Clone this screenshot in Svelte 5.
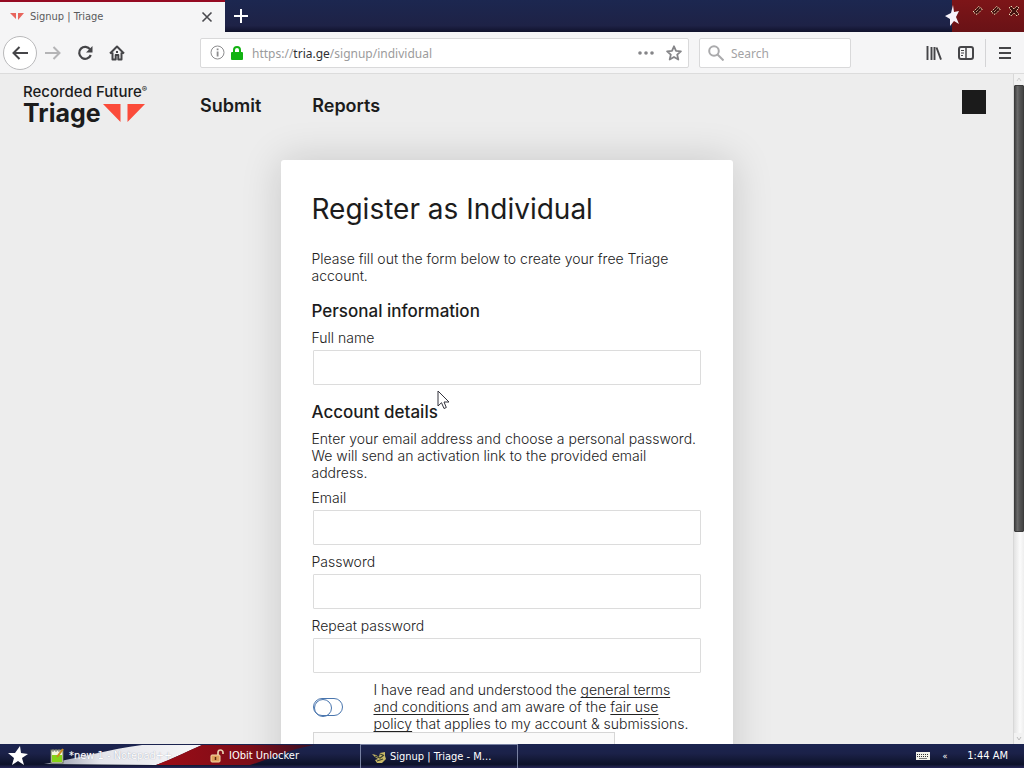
<script>
  let fullName = $state('');
  let email = $state('');
  let password = $state('');
  let repeated = $state('');
  let accepted = $state(false);
</script>

<div class="desktop">
  <div class="tabs">
    <div class="tab">
      <svg width="16" height="12" viewBox="0 0 16 12" aria-hidden="true"><path d="M1 2h6v6zM9 2h6l-6 7z" fill="#e8655d" /></svg>
      <span>Signup | Triage</span>
      <button aria-label="Close tab"><svg width="12" height="12" viewBox="0 0 12 12"><path d="M1.5 1.5l9 9m0-9l-9 9" stroke="#4a4a4f" stroke-width="1.6" /></svg></button>
    </div>
    <button class="new" aria-label="New tab"><svg width="16" height="16" viewBox="0 0 16 16"><path d="M8 1v14M1 8h14" stroke="#fff" stroke-width="2" /></svg></button>
    <div class="titlebar-end">
      <svg class="titlestar" width="18" height="26" viewBox="0 0 18 26" aria-hidden="true"><path d="M10 0l1 7 5-1-3 6 3 7-5-3-4 5v-7l-5-3 6-3z" fill="#f7f3fb" /></svg>
      <button aria-label="Minimize"><svg width="12" height="12" viewBox="0 0 12 12"><path d="M1 7l5.500-5.500L10.500 4 5 9.500z" fill="#40100e" stroke="#f5dcb8" stroke-dasharray="1.5 1" /><path d="M4 7l3.500-3.500" stroke="#f5dcb8" stroke-dasharray="1 1" /></svg></button>
      <button aria-label="Restore"><svg width="12" height="12" viewBox="0 0 12 12"><path d="M1 7l5.500-5.500L10.500 4 5 9.500z" fill="#40100e" stroke="#f5dcb8" stroke-dasharray="1.5 1" /><path d="M4 7l3.500-3.500" stroke="#f5dcb8" stroke-dasharray="1 1" /></svg></button>
      <button aria-label="Close"><svg width="12" height="12" viewBox="0 0 12 12"><path d="M3 1l3 3 3-3 2 2-3 3 3 3-2 2-3-3-3 3-2-2 3-3-3-3z" fill="#40100e" stroke="#f5dcb8" stroke-dasharray="1.5 1" /></svg></button>
    </div>
  </div>

  <div class="toolbar">
    <div class="nav">
      <button class="back" aria-label="Back"><svg width="18" height="16" viewBox="0 0 18 16"><path d="M17 8H2.5M8.500 2l-6 6 6 6" fill="none" stroke="#454548" stroke-width="2" /></svg></button>
      <button aria-label="Forward"><svg width="16" height="16" viewBox="0 0 16 16"><path d="M0 8h14M8.500 2l6 6-6 6" fill="none" stroke="#b4b4b6" stroke-width="2" /></svg></button>
      <button aria-label="Reload"><svg width="16" height="16" viewBox="0 0 16 16"><path d="M13.200 4.500A6 6 0 1 0 13.800 10" fill="none" stroke="#454548" stroke-width="2.200" /><path d="M15.500 1v6.500H9z" fill="#454548" /></svg></button>
      <button aria-label="Home"><svg width="16" height="16" viewBox="0 0 16 16"><path d="M1 8.500l7-7 7 7M3.500 7.500V14.500h3.200v-4.500h2.600v4.500h3.200V7.500" fill="none" stroke="#454548" stroke-width="2" stroke-linejoin="round" /><path d="M7 6h2v2H7z" fill="#454548" /></svg></button>
    </div>
    <div class="address">
      <svg width="15" height="15" viewBox="0 0 15 15" aria-hidden="true"><circle cx="7.500" cy="7.500" r="6.500" fill="none" stroke="#8c8c8e" /><path d="M6.700 3.500h1.800v1.800H6.700zM6.700 6.500h1.800v5H6.700z" fill="#8c8c8e" /></svg>
      <svg width="12" height="14" viewBox="0 0 12 14" aria-hidden="true"><path d="M3 7V4a3 3 0 0 1 6 0v3" fill="none" stroke="#12b212" stroke-width="2" /><rect y="6" width="12" height="8" rx="1" fill="#12b212" /></svg>
      <a class="url" href="#signup">https://<b>tria.ge</b>/signup/individual</a>
      <button aria-label="Page actions"><svg width="16" height="16" viewBox="0 0 16 16"><g fill="#858588"><circle cx="2" cy="8" r="1.800" /><circle cx="8" cy="8" r="1.800" /><circle cx="14" cy="8" r="1.800" /></g></svg></button>
      <button aria-label="Bookmark"><svg width="16" height="16" viewBox="0 0 16 16"><path d="M8 1.300l2 4.500 4.900.5-3.700 3.300 1.100 4.900L8 12l-4.300 2.500 1.100-4.900L1.100 6.300 6 5.800z" fill="none" stroke="#858588" stroke-width="1.800" stroke-linejoin="round" /></svg></button>
    </div>
    <label class="search">
      <svg width="16" height="16" viewBox="0 0 16 16" aria-hidden="true"><circle cx="6" cy="6" r="4.800" fill="none" stroke="#aaaaac" stroke-width="2" /><path d="M9.500 9.500l6 6" stroke="#aaaaac" stroke-width="2" /></svg>
      <input type="search" placeholder="Search" aria-label="Search" />
    </label>
    <div class="tools">
      <button aria-label="Library"><svg width="16" height="16" viewBox="0 0 16 16"><path d="M1.500 1v14M5.500 2v13M8.500 2v13M10.500 2.500l4.500 12.200" fill="none" stroke="#454548" stroke-width="1.900" /></svg></button>
      <button aria-label="Sidebar"><svg width="16" height="16" viewBox="0 0 16 16"><rect x="1" y="2" width="14" height="12" rx="2" fill="none" stroke="#454548" stroke-width="2" /><path d="M8 2v12" stroke="#454548" stroke-width="1.500" /><path d="M3 5.500h3M3 8h3M3 10.500h2" stroke="#454548" /></svg></button>
      <span class="rule"></span>
      <button aria-label="Menu"><svg width="14" height="14" viewBox="0 0 14 14"><path d="M1 2h12M1 7h12M1 12h12" stroke="#454548" stroke-width="2" /></svg></button>
    </div>
  </div>

  <div class="view">
    <div class="page">
      <header>
        <a class="logo" href="#home">
          <span class="brand">Recorded Future<i>®</i></span>
          <span class="product">Triage<svg width="42" height="18" viewBox="0 0 42 18" aria-hidden="true"><path d="M0 0h17.500v18zM24.500 0H42L24.500 18z" fill="#fb4b3a" /></svg></span>
        </a>
        <nav>
          <a href="#submit">Submit</a>
          <a href="#reports">Reports</a>
        </nav>
        <button class="menu" aria-label="Account menu"></button>
      </header>

      <main>
        <form>
          <h1>Register as Individual</h1>
          <p class="intro">Please fill out the form below to create your free Triage account.</p>
          <h2>Personal information</h2>
          <label for="name">Full name</label>
          <input id="name" type="text" bind:value={fullName} />
          <h2>Account details</h2>
          <p>Enter your email address and choose a personal password. We will send an activation link to the provided email address.</p>
          <label for="email">Email</label>
          <input id="email" type="email" bind:value={email} />
          <label for="password">Password</label>
          <input id="password" type="password" bind:value={password} />
          <label for="repeat">Repeat password</label>
          <input id="repeat" type="password" bind:value={repeated} />
          <div class="terms">
            <input id="accept" type="checkbox" bind:checked={accepted} />
            <label for="accept">I have read and understood the <a href="#terms">general terms and conditions</a> and am aware of the <a href="#fair">fair use policy</a> that applies to my account &amp; submissions.</label>
          </div>
          <div class="captcha"></div>
        </form>
      </main>
    </div>
    <div class="scroll">
      <svg width="10" height="11" viewBox="0 0 10 11" aria-hidden="true"><path d="M3 7l2-3 2 3" fill="none" stroke="#cfcfcf" /></svg>
      <div class="thumb"></div>
      <div class="track"></div>
      <svg width="10" height="11" viewBox="0 0 10 11" aria-hidden="true"><path d="M3 4l2 3 2-3" fill="none" stroke="#bdbdbd" /></svg>
    </div>
  </div>

  <div class="taskbar">
    <svg class="flag" width="330" height="24" viewBox="0 0 330 24" aria-hidden="true">
      <defs>
        <linearGradient id="white"><stop offset="0" stop-color="#8d91a3" /><stop offset="0.350" stop-color="#e3e4ea" /><stop offset="1" stop-color="#f7f7f9" /></linearGradient>
        <linearGradient id="red"><stop offset="0" stop-color="#9c0c16" /><stop offset="0.600" stop-color="#7d0d18" /><stop offset="1" stop-color="#3a1023" /></linearGradient>
      </defs>
      <path d="M44 20C80 14 110 5 142 1h60c-20 9-32 15-46 20z" fill="url(#white)" />
      <path d="M202 1h112c-28 5-44 14-64 20h-94c16-6 28-12 46-20z" fill="url(#red)" />
    </svg>
    <button class="start" aria-label="Start"><svg width="20" height="20" viewBox="0 0 20 20"><path d="M12 0l1 7 7 1-6 4 2 7-6-4-6 4 2-7-6-5 7 0z" fill="#fff" /></svg></button>
    <button class="task">
      <svg width="14" height="16" viewBox="0 0 14 16" aria-hidden="true"><rect x="1" y="2" width="12" height="13" fill="#f3f6dc" stroke="#667052" /><path d="M2 7h10v7H2z" fill="#86d317" /><path d="M3 1v3M6 1v3M9 1v3" stroke="#777" /><path d="M13 1L7 9" stroke="#c98b22" stroke-width="2" /></svg>
      <span class="notes">*new 1 - Notepad++</span>
    </button>
    <button class="task">
      <svg width="14" height="14" viewBox="0 0 14 14" aria-hidden="true"><path d="M8 7V3.500a2.500 2.500 0 0 1 5 0V5" fill="none" stroke="#e8d0b0" stroke-width="1.700" /><rect x="1" y="6" width="9" height="7" rx="1" fill="#dfa05c" stroke="#f3d9a8" /><path d="M5.500 8v3" stroke="#5a2a12" stroke-width="1.500" /></svg>
      <span>IObit Unlocker</span>
    </button>
    <button class="task active">
      <svg width="14" height="14" viewBox="0 0 14 14" aria-hidden="true"><path d="M0 4l4 1 3 2 1-4 5-1v4l1 3-4 4H5L3 10l3-1-3-2z" fill="#c9b966" /><path d="M3 6l5 2 4-3M5 11l6-2M8 4l3 1" stroke="#3c4230" stroke-width="1.200" fill="none" /></svg>
      <span>Signup | Triage - M...</span>
    </button>
    <div class="tray">
      <svg width="14" height="8" viewBox="0 0 14 8" aria-hidden="true"><rect width="14" height="8" fill="#f2f2ea" /><path d="M1 2.500h12M1 4.500h12" stroke="#333" stroke-dasharray="1 1" /><path d="M3 6.500h8" stroke="#777" /></svg>
      <span>«</span>
      <time>1:44 AM</time>
    </div>
  </div>

  <svg class="cursor" width="13" height="20" viewBox="0 0 13 20" aria-hidden="true"><path d="M1 1v15l3.500-3.300L7 18.500l2.300-1L7 12h5z" fill="#fff" stroke="#33333d" /></svg>
</div>

<style>
  :global(body) { background: #ededed; }
  * { box-sizing: border-box; }
  svg { display: block; flex: none; }
  button { border: 0; padding: 0; background: none; font: inherit; color: inherit; display: grid; place-items: center; }
  a { color: inherit; text-decoration: none; }
  .desktop { position: relative; height: 100vh; display: flex; flex-direction: column; overflow: hidden; font: 11px/16px "DejaVu Sans Condensed", "DejaVu Sans", sans-serif; color: #1c1c1c; }

  .tabs { flex: none; height: 32px; display: flex; background: linear-gradient(#1c2750, #1e2246 80%, #10122c); }
  .tab { width: 225px; display: flex; align-items: center; gap: 5px; padding: 0 12px 0 9px; background: #f5f5f6; border-top: 2px solid #950a22; color: #5a5a5c; }
  .tab button { margin-left: auto; }
  .new { width: 32px; }
  .titlebar-end { margin-left: auto; width: 72px; display: flex; align-items: flex-start; gap: 6px; padding-top: 5px; background: linear-gradient(#7d1518, #691216); }
  .titlestar { margin-left: -9px; margin-right: 5px; }

  .toolbar { flex: none; height: 42px; display: flex; align-items: center; background: #f5f5f6; border-bottom: 1px solid #dcdcdc; padding: 0 12px 0 3px; }
  .nav { display: flex; align-items: center; gap: 16px; width: 197px; }
  .back { width: 34px; height: 34px; border: 1px solid #b9b9bb; border-radius: 50%; background: #fff; margin-right: -8px; }
  .address, .search { height: 30px; display: flex; align-items: center; background: #fff; border: 1px solid #d9d9da; border-radius: 2px; font: 12px/20px "Noto Sans", sans-serif; color: #9b9b9c; }
  .address { flex: 1; gap: 6px; padding: 0 6px 0 9px; }
  .url { flex: 1; padding: 2px 0 0 3px; }
  .url b { font-weight: 400; color: #303032; }
  .address button { margin-left: 6px; }
  .search { width: 152px; margin-left: 10px; padding-left: 8px; gap: 7px; }
  .search input { border: 0; outline: 0; padding: 2px 0 0; width: 100%; font: inherit; background: none; }
  .search input::placeholder { color: #a3a3a5; opacity: 1; }
  .tools { margin-left: 75px; display: flex; align-items: center; gap: 16px; }
  .rule { width: 1px; height: 28px; background: #d4d4d6; margin: 0 -4px 0 -5px; }

  .view { flex: 1; min-height: 0; display: flex; background: #ededed; font: 14px/17px Inter, sans-serif; font-optical-sizing: none; }
  .page { flex: 1; min-width: 0; overflow: hidden; }
  header { height: 64px; display: flex; align-items: center; padding: 0 27px 0 23px; }
  .logo { display: flex; flex-direction: column; width: 177px; padding-bottom: 4px; }
  .brand { font-size: 15px; line-height: 18px; font-weight: 500; white-space: nowrap; }
  .brand i { font-size: 8px; font-style: normal; vertical-align: 5px; line-height: 8px; }
  .product { display: flex; align-items: center; gap: 2px; font-size: 25px; line-height: 24px; font-weight: 700; }
  nav { flex: 1; display: flex; gap: 51px; font-size: 18px; line-height: 24px; font-weight: 600; }
  .menu { width: 24px; height: 24px; background: #1b1b1b; margin-bottom: 8px; }

  main { padding: 22px 16px; }
  form { max-width: 452px; margin: 0 auto; padding: 32px 31px; display: flex; flex-direction: column; background: #fff; border-radius: 3px; box-shadow: 0 0 40px rgba(0, 0, 0, 0.16); color: #222; font-weight: 300; }
  h1 { margin: 0; font-size: 28px; line-height: 34px; font-weight: 400; color: #1c1c1c; }
  h2 { margin: 17px 0 8px; font-size: 17px; line-height: 20px; font-weight: 500; color: #1c1c1c; }
  p { margin: 0 0 8px; }
  .intro { margin: 24px 0 0; }
  form > input { height: 35px; margin: 4px 1px 8px; padding: 0 8px; border: 1px solid #dcdcdc; border-radius: 1px; background: #fff; font: inherit; }
  form > input:focus { outline: 1px solid #3b68a5; }
  form > input#name { margin-bottom: 0; }
  .terms { position: relative; display: flex; align-items: center; gap: 31px; padding-right: 8px; }
  .terms a { text-decoration: underline 1px; text-underline-offset: 2px; text-decoration-skip-ink: none; }
  .terms input { appearance: none; flex: none; position: relative; width: 30px; height: 18px; margin: 0 0 0 1px; border: 1px solid #4a76ae; border-radius: 9px; background: #fff; }
  .terms input::before { content: ""; position: absolute; left: 0; top: 0; width: 16px; height: 16px; border: 1px solid #4a76ae; border-radius: 50%; }
  .terms input:checked::before { left: 12px; }
  .captcha { width: 302px; max-width: 100%; height: 76px; margin-left: 1px; border: 1px solid #d6d6d6; background: #fafafa; }

  .scroll { flex: none; width: 11px; display: flex; flex-direction: column; border-left: 1px solid #d8d8d8; background: #f2f2f2; }
  .thumb { flex: 446; background: linear-gradient(90deg, #444, #6a6a6a 30%, #555 60%, #444); border: 1px solid #3c3c3c; border-radius: 1px; }
  .track { flex: 202; background: linear-gradient(90deg, #e2e2e2, #fbfbfb 60%, #eee); }

  .taskbar { flex: none; position: relative; height: 24px; display: flex; align-items: stretch; background: linear-gradient(#1b2450, #1b2148 40%, #0d1229 85%, #28285a); color: #fff; }
  .flag { position: absolute; left: 0; top: 0; }
  .start { width: 50px; padding-right: 14px; position: relative; }
  .task { position: relative; width: 160px; display: flex; align-items: center; gap: 5px; white-space: nowrap; overflow: hidden; }
  .notes { text-shadow: 0 0 1px #8a8ea2; }
  .active { width: 158px; margin-left: -10px; padding-left: 11px; gap: 4px; border: 1px solid #7881a2; border-bottom: 0; }
  .tray { margin-left: auto; padding-right: 16px; display: flex; align-items: center; gap: 12px; }
  .tray span { margin-right: 8px; font-size: 9px; }

  .cursor { position: absolute; left: 437px; top: 390px; }
</style>
